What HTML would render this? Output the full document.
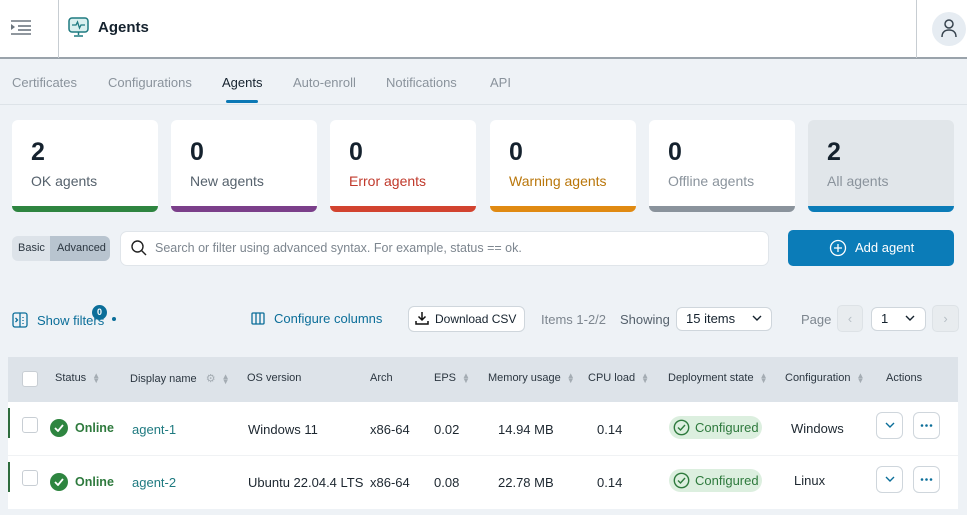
<!DOCTYPE html>
<html><head><meta charset="utf-8"><style>
*{box-sizing:border-box;margin:0;padding:0}
body{width:967px;height:515px;overflow:hidden;background:#eef2f6;font-family:"Liberation Sans",sans-serif;color:#1b2733;position:relative;font-size:13px}
.a{position:absolute}
.hdr{left:0;top:0;width:967px;height:59px;background:#fff;border-bottom:2px solid #9aa3ab}
.tabs span{position:absolute;top:75px;font-size:13px;color:#8a939c}
.card{position:absolute;top:120px;width:146px;height:92px;background:#fff;border-radius:6px;overflow:hidden}
.card b{position:absolute;left:19px;top:18px;font-size:25px;color:#15222e}
.card i{position:absolute;left:19px;top:53px;font-style:normal;font-size:14px;color:#55616c}
.card u{position:absolute;left:0;bottom:0;width:100%;height:6px}
.th{position:absolute;top:372px;font-size:11px;color:#2b3640}
.td{position:absolute;font-size:13px;color:#1d2730}
.sort{display:inline-block;margin-left:6px;color:#a4acb3;font-size:8px;line-height:5px;vertical-align:middle}
.chk{position:absolute;width:16px;height:16px;border:1px solid #c8ced4;border-radius:3px;background:#fff}
.ok{position:absolute;width:18px;height:18px;border-radius:50%;background:#2e8540}
.pill{position:absolute;left:669px;width:93px;height:23px;background:#dcefdf;border-radius:12px;color:#2e7a3d;font-size:13px;line-height:23px;padding-left:26px}
.btn{position:absolute;width:27px;height:27px;border:1px solid #cfd6dc;border-radius:6px;background:#fff;color:#0b6e99;text-align:center}
</style></head><body>
<div class="a hdr"></div>
<div class="a" style="left:58px;top:0;width:1px;height:58px;background:#c7cdd2"></div>
<div class="a" style="left:916px;top:0;width:1px;height:58px;background:#c7cdd2"></div>
<svg class="a" style="left:11px;top:19px" width="21" height="16"><g stroke="#6b757e" stroke-width="1.6"><line x1="0" y1="2" x2="20" y2="2"/><line x1="7" y1="7" x2="20" y2="7"/><line x1="7" y1="11" x2="20" y2="11"/><line x1="0" y1="15" x2="20" y2="15"/></g><path d="M0 5l4 3-4 3z" fill="#6b757e"/></svg>
<svg class="a" style="left:68px;top:17px" width="21" height="20"><rect x="1" y="1" width="19" height="14" rx="3" fill="#d9f0ef" stroke="#1f7a80" stroke-width="1.5"/><path d="M4 8h4l1.5-3 2 6 1.5-3h4" fill="none" stroke="#1f7a80" stroke-width="1.3"/><path d="M10.5 15v3M6 19h9" stroke="#1f7a80" stroke-width="1.5"/></svg>
<div class="a" style="left:98px;top:19px;font-size:15px;font-weight:bold;color:#15222e">Agents</div>
<div class="a" style="left:932px;top:12px;width:34px;height:34px;border-radius:50%;background:#e6ecf2"></div>
<svg class="a" style="left:939px;top:18px" width="20" height="20"><circle cx="10" cy="6" r="4" fill="none" stroke="#37434e" stroke-width="1.5"/><path d="M3 19c0-5 3-7 7-7s7 2 7 7" fill="none" stroke="#37434e" stroke-width="1.5"/></svg>
<div class="tabs"><span style="left:12px">Certificates</span><span style="left:108px">Configurations</span><span style="left:222px;color:#15222e">Agents</span><span style="left:293px">Auto-enroll</span><span style="left:386px">Notifications</span><span style="left:490px">API</span></div>
<div class="a" style="left:226px;top:100px;width:32px;height:3px;background:#0b78b5;border-radius:2px"></div>
<div class="a" style="left:0;top:104px;width:967px;height:1px;background:#dde3e8"></div>

<div class="card" style="left:12px"><b>2</b><i>OK agents</i><u style="background:#2e8540"></u></div>
<div class="card" style="left:171px"><b>0</b><i>New agents</i><u style="background:#7b3f8a"></u></div>
<div class="card" style="left:330px"><b>0</b><i style="color:#c0392b">Error agents</i><u style="background:#d2432f"></u></div>
<div class="card" style="left:490px"><b>0</b><i style="color:#b9760a">Warning agents</i><u style="background:#e08a12"></u></div>
<div class="card" style="left:649px"><b>0</b><i style="color:#8a939c">Offline agents</i><u style="background:#8a939c"></u></div>
<div class="card" style="left:808px;background:#e1e6ea"><b>2</b><i style="color:#8a939c">All agents</i><u style="background:#0b7cb8"></u></div>

<div class="a" style="left:12px;top:236px;width:98px;height:25px;border-radius:6px;background:#dde3e9"></div>
<div class="a" style="left:50px;top:236px;width:60px;height:25px;border-radius:0 6px 6px 0;background:#b8c4cf"></div>
<div class="a" style="left:18px;top:242px;font-size:11px;color:#2b3640">Basic</div>
<div class="a" style="left:57px;top:242px;font-size:11px;color:#2b3640">Advanced</div>
<div class="a" style="left:120px;top:231px;width:649px;height:35px;background:#fff;border:1px solid #e0e5ea;border-radius:7px"></div>
<svg class="a" style="left:131px;top:240px" width="16" height="16"><circle cx="6.5" cy="6.5" r="5.5" fill="none" stroke="#222" stroke-width="1.4"/><path d="M10.5 10.5l4.5 4.5" stroke="#222" stroke-width="1.4"/></svg>
<div class="a" style="left:155px;top:241px;font-size:12.5px;color:#7d868f">Search or filter using advanced syntax. For example, status == ok.</div>
<div class="a" style="left:788px;top:230px;width:166px;height:36px;background:#0b7cb8;border-radius:5px"></div>
<svg class="a" style="left:829px;top:239px" width="18" height="18"><circle cx="9" cy="9" r="7.5" fill="none" stroke="#fff" stroke-width="1.3"/><path d="M9 5v8M5 9h8" stroke="#fff" stroke-width="1.3"/></svg>
<div class="a" style="left:855px;top:240px;font-size:13px;color:#fff">Add agent</div>

<svg class="a" style="left:12px;top:312px" width="16" height="16"><rect x="1" y="1" width="14" height="14" rx="2" fill="none" stroke="#0b6e99" stroke-width="1.3"/><path d="M8 1v14M3.5 6l2 2-2 2M11 5v1M11 8v1M11 11v1" stroke="#0b6e99" stroke-width="1.3" fill="none"/></svg>
<div class="a" style="left:37px;top:313px;font-size:13px;color:#0b6e99">Show filters</div>
<div class="a" style="left:92px;top:305px;width:15px;height:15px;border-radius:50%;background:#0b6e99;color:#fff;font-size:9px;text-align:center;line-height:15px;font-weight:bold">0</div>
<div class="a" style="left:112px;top:317px;width:4px;height:4px;border-radius:50%;background:#0b6e99"></div>
<svg class="a" style="left:251px;top:312px" width="14" height="13"><rect x="1" y="1" width="12" height="11" rx="1" fill="none" stroke="#0b6e99" stroke-width="1.3"/><path d="M5 1v11M9 1v11" stroke="#0b6e99" stroke-width="1.3"/></svg>
<div class="a" style="left:274px;top:311px;font-size:13px;color:#0b6e99">Configure columns</div>
<div class="a" style="left:408px;top:306px;width:117px;height:26px;background:#fff;border:1px solid #cfd6dc;border-radius:6px"></div>
<svg class="a" style="left:415px;top:311px" width="14" height="14"><path d="M7 1v8M3.5 5.5L7 9l3.5-3.5M1 10v3h12v-3" fill="none" stroke="#111" stroke-width="1.5"/></svg>
<div class="a" style="left:435px;top:312px;font-size:12px;color:#15222e">Download CSV</div>
<div class="a" style="left:541px;top:312px;font-size:13px;color:#7d868f">Items 1-2/2</div>
<div class="a" style="left:620px;top:312px;font-size:13px;color:#55616c">Showing</div>
<div class="a" style="left:676px;top:307px;width:96px;height:24px;background:#fff;border:1px solid #cfd6dc;border-radius:6px"></div>
<div class="a" style="left:686px;top:311px;font-size:13px;color:#15222e">15 items</div>
<svg class="a" style="left:752px;top:314px" width="10" height="8"><path d="M1 2l4 4 4-4" fill="none" stroke="#15222e" stroke-width="1.4"/></svg>
<div class="a" style="left:801px;top:312px;font-size:13px;color:#7d868f">Page</div>
<div class="a" style="left:837px;top:305px;width:26px;height:27px;background:#e8ecef;border:1px solid #dde2e6;border-radius:5px;color:#b6bec5;text-align:center;line-height:25px">‹</div>
<div class="a" style="left:871px;top:307px;width:55px;height:24px;background:#fff;border:1px solid #cfd6dc;border-radius:6px"></div>
<div class="a" style="left:881px;top:311px;font-size:13px;color:#15222e">1</div>
<svg class="a" style="left:905px;top:314px" width="10" height="8"><path d="M1 2l4 4 4-4" fill="none" stroke="#15222e" stroke-width="1.4"/></svg>
<div class="a" style="left:932px;top:305px;width:27px;height:27px;background:#e8ecef;border:1px solid #dde2e6;border-radius:5px;color:#b6bec5;text-align:center;line-height:25px">›</div>

<div class="a" style="left:8px;top:357px;width:950px;height:45px;background:#dde3e9"></div>
<div class="a" style="left:8px;top:402px;width:950px;height:107px;background:#fff"></div>
<div class="a" style="left:8px;top:455px;width:950px;height:1px;background:#f0f2f4"></div>
<div class="a" style="left:8px;top:408px;width:2px;height:30px;background:#2e6b3d"></div>
<div class="a" style="left:8px;top:462px;width:2px;height:30px;background:#2e6b3d"></div>
<div class="chk" style="left:22px;top:371px"></div>
<div class="th" style="left:55px">Status<span class="sort">▲<br>▼</span></div>
<div class="th" style="left:130px">Display name <span style="color:#a4acb3;margin-left:6px">⚙</span><span class="sort">▲<br>▼</span></div>
<div class="th" style="left:247px">OS version</div>
<div class="th" style="left:370px">Arch</div>
<div class="th" style="left:434px">EPS<span class="sort">▲<br>▼</span></div>
<div class="th" style="left:488px">Memory usage<span class="sort">▲<br>▼</span></div>
<div class="th" style="left:588px">CPU load<span class="sort">▲<br>▼</span></div>
<div class="th" style="left:668px">Deployment state<span class="sort">▲<br>▼</span></div>
<div class="th" style="left:785px">Configuration<span class="sort">▲<br>▼</span></div>
<div class="th" style="left:886px">Actions</div>

<div class="chk" style="left:22px;top:417px"></div>
<div class="ok" style="left:50px;top:419px"></div><svg class="a" style="left:54px;top:424px" width="10" height="8"><path d="M1 4l3 3 5-6" fill="none" stroke="#fff" stroke-width="1.8"/></svg>
<div class="td" style="left:75px;top:421px;color:#2e7a3d;font-weight:bold;font-size:12.5px">Online</div>
<div class="td" style="left:132px;top:422px;color:#1f7a80">agent-1</div>
<div class="td" style="left:248px;top:422px">Windows 11</div>
<div class="td" style="left:370px;top:422px">x86-64</div>
<div class="td" style="left:434px;top:422px">0.02</div>
<div class="td" style="left:498px;top:422px">14.94 MB</div>
<div class="td" style="left:597px;top:422px">0.14</div>
<div class="pill" style="top:416px">Configured</div>
<svg class="a" style="left:673px;top:419px" width="17" height="17"><circle cx="8.5" cy="8.5" r="7.2" fill="none" stroke="#2e7a3d" stroke-width="1.4"/><path d="M5 8.5l2.5 2.5 4.5-5" fill="none" stroke="#2e7a3d" stroke-width="1.4"/></svg>
<div class="td" style="left:791px;top:421px">Windows</div>
<div class="btn" style="left:876px;top:412px"><svg width="12" height="25"><path d="M2 10l4 4 4-4" fill="none" stroke="#0b6e99" stroke-width="1.4"/></svg></div>
<div class="btn" style="left:913px;top:412px"><svg width="25" height="25"><g fill="#0b6e99"><circle cx="8" cy="12.5" r="1.3"/><circle cx="12.5" cy="12.5" r="1.3"/><circle cx="17" cy="12.5" r="1.3"/></g></svg></div>

<div class="chk" style="left:22px;top:470px"></div>
<div class="ok" style="left:50px;top:473px"></div><svg class="a" style="left:54px;top:478px" width="10" height="8"><path d="M1 4l3 3 5-6" fill="none" stroke="#fff" stroke-width="1.8"/></svg>
<div class="td" style="left:75px;top:475px;color:#2e7a3d;font-weight:bold;font-size:12.5px">Online</div>
<div class="td" style="left:132px;top:475px;color:#1f7a80">agent-2</div>
<div class="td" style="left:248px;top:475px">Ubuntu 22.04.4 LTS</div>
<div class="td" style="left:370px;top:475px">x86-64</div>
<div class="td" style="left:434px;top:475px">0.08</div>
<div class="td" style="left:498px;top:475px">22.78 MB</div>
<div class="td" style="left:597px;top:475px">0.14</div>
<div class="pill" style="top:469px">Configured</div>
<svg class="a" style="left:673px;top:472px" width="17" height="17"><circle cx="8.5" cy="8.5" r="7.2" fill="none" stroke="#2e7a3d" stroke-width="1.4"/><path d="M5 8.5l2.5 2.5 4.5-5" fill="none" stroke="#2e7a3d" stroke-width="1.4"/></svg>
<div class="td" style="left:794px;top:473px">Linux</div>
<div class="btn" style="left:876px;top:466px"><svg width="12" height="25"><path d="M2 10l4 4 4-4" fill="none" stroke="#0b6e99" stroke-width="1.4"/></svg></div>
<div class="btn" style="left:913px;top:466px"><svg width="25" height="25"><g fill="#0b6e99"><circle cx="8" cy="12.5" r="1.3"/><circle cx="12.5" cy="12.5" r="1.3"/><circle cx="17" cy="12.5" r="1.3"/></g></svg></div>
</body></html>
